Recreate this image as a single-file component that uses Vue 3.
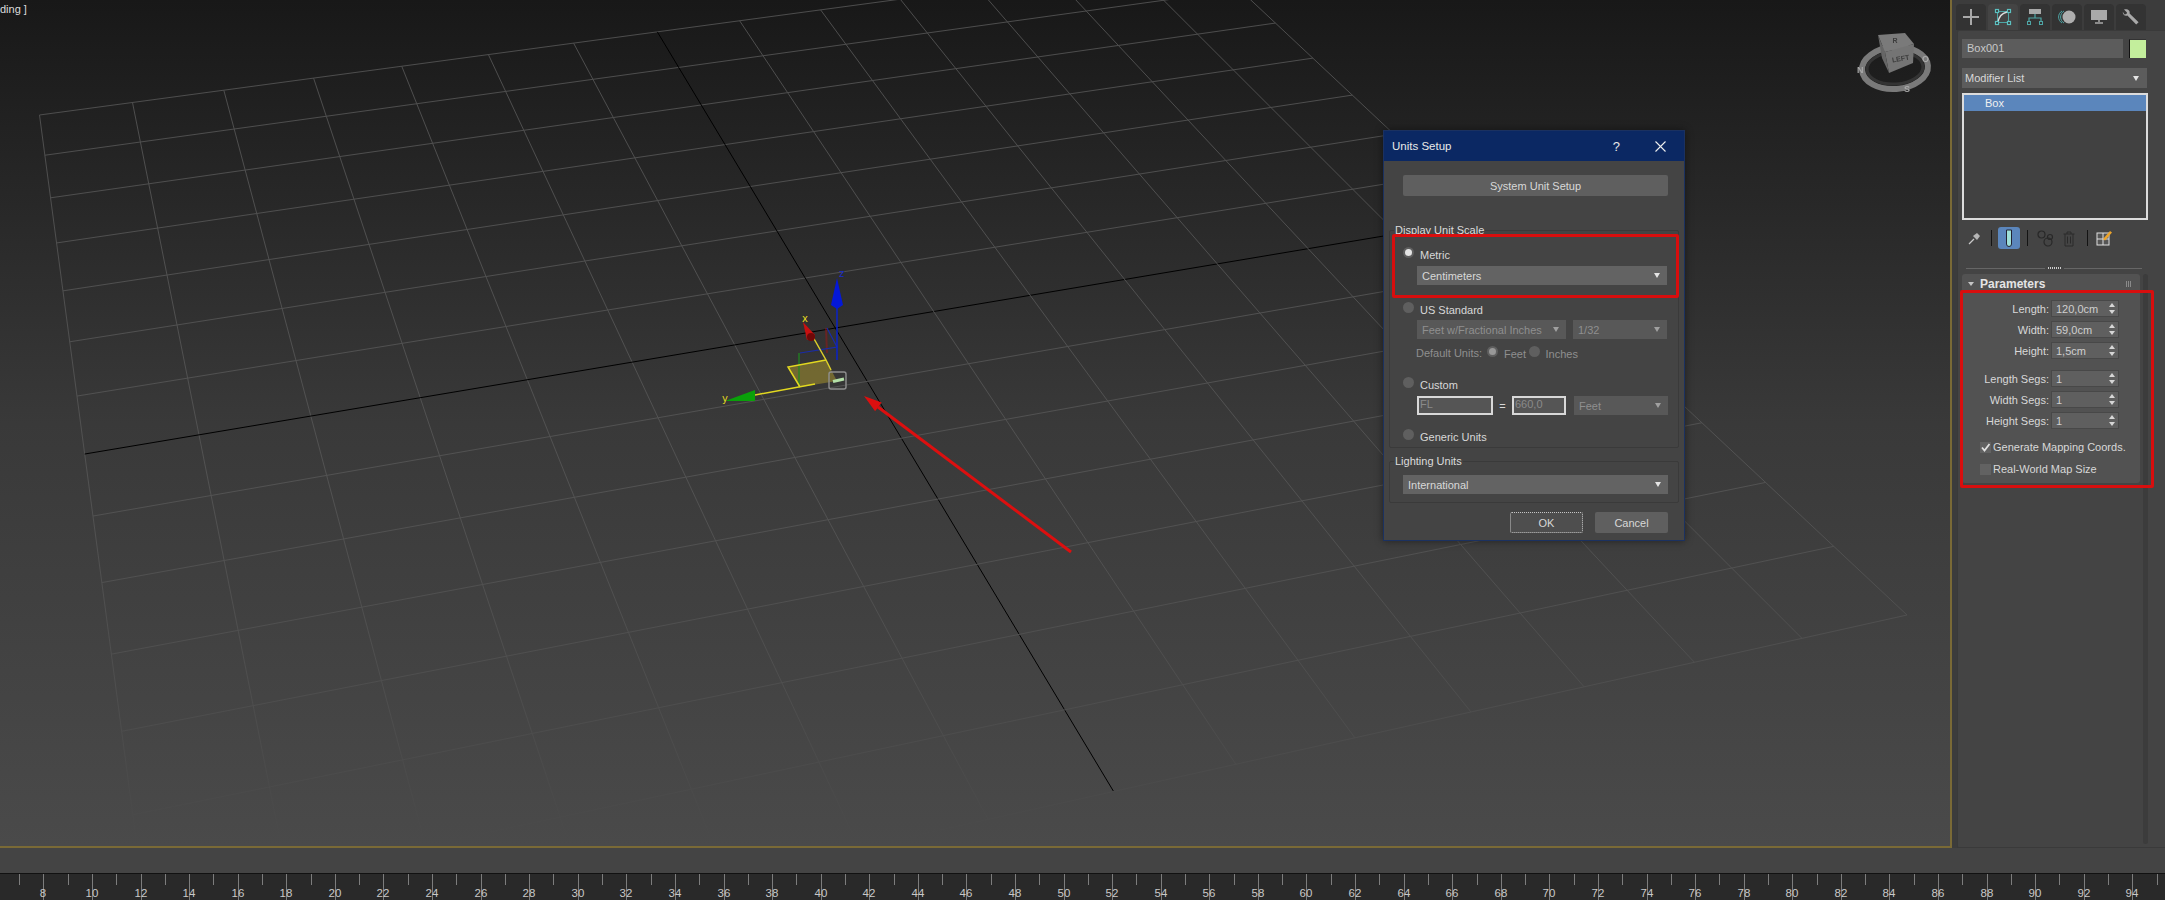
<script setup>
import { computed } from 'vue'

// grid corners read off the screenshot (some lie outside the viewport)
const TL = [39.5, 115]
const TR = [1206, -42]
const BR = [1907, 615]
const BL = [158, 1004]
const CELLS = 14

function makeHomography() {
  const dx1 = TR[0] - BR[0]
  const dx2 = BL[0] - BR[0]
  const sx = TL[0] - TR[0] + BR[0] - BL[0]
  const dy1 = TR[1] - BR[1]
  const dy2 = BL[1] - BR[1]
  const sy = TL[1] - TR[1] + BR[1] - BL[1]
  const den = dx1 * dy2 - dx2 * dy1
  const g = (sx * dy2 - dx2 * sy) / den
  const h = (dx1 * sy - sx * dy1) / den
  const a = TR[0] - TL[0] + g * TR[0]
  const b = BL[0] - TL[0] + h * BL[0]
  const d = TR[1] - TL[1] + g * TR[1]
  const e = BL[1] - TL[1] + h * BL[1]
  return (u, v) => {
    const w = g * u + h * v + 1
    return [(a * u + b * v + TL[0]) / w, (d * u + e * v + TL[1]) / w]
  }
}

const gridLines = computed(() => {
  const map = makeHomography()
  const out = []
  for (let i = 0; i <= CELLS; i++) {
    const t = i / CELLS
    const [a, b] = map(t, 0)
    const [c, d] = map(t, 1)
    const [e, f] = map(0, t)
    const [g, h] = map(1, t)
    out.push({ key: 'v' + i, x1: a, y1: b, x2: c, y2: d, center: i === 7 })
    out.push({ key: 'h' + i, x1: e, y1: f, x2: g, y2: h, center: i === 7 })
  }
  return out
})

const ticks = computed(() => {
  const out = []
  for (let n = 7; n <= 95; n++) {
    out.push({ n, x: Math.round(43.4 + 24.29 * (n - 8)) + 0.5, major: n % 2 === 0 })
  }
  return out
})

const params = [
  { label: 'Length:', value: '120,0cm' },
  { label: 'Width:', value: '59,0cm' },
  { label: 'Height:', value: '1,5cm' },
  { label: 'Length Segs:', value: '1', gap: true },
  { label: 'Width Segs:', value: '1' },
  { label: 'Height Segs:', value: '1' }
]
</script>

<template>
  <div class="app">
    <div class="main">
      <div class="viewport">
        <svg class="scene" width="1950" height="846" viewBox="0 0 1950 846">
          <defs>
            <linearGradient id="gridFade" gradientUnits="userSpaceOnUse" x1="0" y1="0" x2="0" y2="810">
              <stop offset="0" stop-color="#4c4c4c" />
              <stop offset="0.6" stop-color="#525252" />
              <stop offset="0.85" stop-color="#4e4e4e" />
              <stop offset="1" stop-color="#4a4a4a" />
            </linearGradient>
          </defs>
          <line v-for="l in gridLines" :key="l.key" :x1="l.x1" :y1="l.y1" :x2="l.x2" :y2="l.y2"
            :stroke="l.center ? '#000' : 'url(#gridFade)'" stroke-width="1" />

          <!-- transform gizmo -->
          <polygon points="788,367 826,360 837,381 800,387" fill="#7d7130" fill-opacity="0.85" />
          <line x1="826" y1="328" x2="827" y2="353" stroke="#8a1a1a" stroke-opacity="0.6" stroke-width="2" />
          <polyline points="800,353 837,347 827,328" fill="none" stroke="#1a2ca8" stroke-width="1.2" />
          <line x1="799" y1="353" x2="799" y2="387" stroke="#1f8a1f" stroke-width="1.2" />
          <line x1="837" y1="308" x2="837" y2="360" stroke="#0a22c8" stroke-width="1.5" />
          <polygon points="837,278 843,305 837,309 831,305" fill="#0418d8" />
          <polyline points="813,337 826,360 831,370" fill="none" stroke="#dccf2a" stroke-width="1.5" />
          <polyline points="755,395 815,384" fill="none" stroke="#e2d820" stroke-width="1.5" />
          <polyline points="800,387 788,367 826,360" fill="none" stroke="#e2d820" stroke-width="1.5" />
          <polygon points="803,322 815,335 807,340" fill="#c81010" />
          <circle cx="811" cy="337" r="4" fill="#700808" />
          <polygon points="725,401 755,390 755,401" fill="#0aa00a" />
          <rect x="829" y="372" width="17" height="17" rx="2" fill="none" stroke="#8f8f8f" stroke-width="1.4" />
          <line x1="833" y1="381.5" x2="844" y2="379" stroke="#b4e0a8" stroke-width="3" />
          <text x="839" y="277" class="axis axis-z">z</text>
          <text x="802" y="322" class="axis">x</text>
          <text x="722" y="402" class="axis">y</text>

          <!-- view cube -->
          <g class="cube">
            <ellipse cx="1895" cy="68" rx="33" ry="21" fill="none" stroke="#7a7a7a" stroke-width="6" transform="rotate(-4 1895 68)" />
            <ellipse cx="1895" cy="68" rx="28" ry="16" fill="none" stroke="#333" stroke-width="3" transform="rotate(-4 1895 68)" />
            <polygon points="1878,35 1905,33 1914,44 1885,52" fill="#7a7a7a" />
            <polygon points="1885,52 1914,44 1913,63 1889,73" fill="#747474" />
            <polygon points="1878,35 1885,52 1889,73 1882,58" fill="#666" />
            <text x="1901" y="61" class="cube-text" transform="rotate(-10 1901 61)">LEFT</text>
            <text x="1895" y="43" class="cube-text">R</text>
            <text x="1857" y="73" class="ring-text">N</text>
            <text x="1904" y="92" class="ring-text">S</text>
            <text x="1922" y="62" class="ring-text">O</text>
          </g>

          <!-- annotation arrow -->
          <line x1="878" y1="407" x2="1071" y2="552" stroke="#dc0f0f" stroke-width="3" />
          <polygon points="864,396 875.1,411.2 881.7,402.4" fill="#dc0f0f" />
        </svg>
        <span class="shading">ding ]</span>
      </div>

      <aside class="panel">
        <div class="tabs">
          <div class="tab">
            <svg width="18" height="18" viewBox="0 0 18 18"><path d="M9 1v16M1 9h16" stroke="#a9a9a9" stroke-width="2" fill="none" /></svg>
          </div>
          <div class="tab active">
            <svg width="18" height="18" viewBox="0 0 18 18">
              <path d="M3.5 3.5h11M14.5 3.5v11M14.5 14.5h-11M3.5 14.5v-11" stroke="#4ea5a5" stroke-width="1" fill="none" />
              <path d="M4 14C5 8 9 5 13 4" stroke="#ddd" stroke-width="1.4" fill="none" />
              <g fill="#333" stroke="#5cc0c0" stroke-width="1.2">
                <rect x="1.5" y="1.5" width="3" height="3" /><rect x="13.5" y="1.5" width="3" height="3" />
                <rect x="1.5" y="13.5" width="3" height="3" /><rect x="13.5" y="13.5" width="3" height="3" />
              </g>
            </svg>
          </div>
          <div class="tab">
            <svg width="18" height="18" viewBox="0 0 18 18">
              <rect x="3" y="1" width="12" height="5" fill="#a9a9a9" />
              <path d="M9 6v4M3 14v-4h12v4" stroke="#4ea5a5" stroke-width="1.2" fill="none" />
              <rect x="1.5" y="13.5" width="3" height="3" fill="none" stroke="#4ea5a5" />
              <rect x="13.5" y="13.5" width="3" height="3" fill="none" stroke="#4ea5a5" />
            </svg>
          </div>
          <div class="tab">
            <svg width="20" height="18" viewBox="0 0 20 18">
              <path d="M5 3A7 7 0 0 0 5 15" stroke="#4ea5a5" fill="none" />
              <path d="M7 3A7 7 0 0 0 7 15" stroke="#4ea5a5" fill="none" />
              <circle cx="12" cy="9" r="6.5" fill="#aeaeae" />
            </svg>
          </div>
          <div class="tab">
            <svg width="18" height="18" viewBox="0 0 18 18">
              <rect x="1" y="2" width="16" height="10" fill="#a9a9a9" />
              <path d="M9 12v2M5 15h8" stroke="#a9a9a9" stroke-width="1.5" />
            </svg>
          </div>
          <div class="tab">
            <svg width="18" height="18" viewBox="0 0 18 18">
              <path d="M2 1.5 5 4.5 4.5 6 2.5 6.5 0.8 3.8C0.6 6.5 2.5 8.4 5.4 7.6L14.2 16.5 16.6 14.2 7.6 5.4C8.4 2.6 5.6 0.4 2 1.5Z" fill="#a9a9a9" />
            </svg>
          </div>
        </div>

        <div class="panel-body">
          <div class="name-row">
            <div class="name-input">Box001</div>
            <div class="swatch"></div>
          </div>
          <div class="modifier-select">
            <span>Modifier List</span>
            <i class="caret"></i>
          </div>
          <div class="stack-list">
            <div class="stack-item">Box</div>
          </div>
          <div class="stack-tools">
            <svg class="tool-pin" width="14" height="14" viewBox="0 0 14 14">
              <path d="M1 13 6 8" stroke="#c9c9c9" stroke-width="1.2" />
              <path d="M5 5 9 2l3 3-3 4z" fill="#b5b5b5" />
            </svg>
            <span class="tool-sep sep-a"></span>
            <div class="tool-active">
              <svg width="8" height="18" viewBox="0 0 8 18">
                <path d="M1.5 1h5v14a2 2 0 0 1-5 0z" fill="#9fe0d8" stroke="#223" stroke-width="1" />
              </svg>
            </div>
            <span class="tool-sep sep-b"></span>
            <svg class="tool-links" width="17" height="17" viewBox="0 0 17 17">
              <g fill="none" stroke="#282828" stroke-width="1.2">
                <circle cx="4.5" cy="4.5" r="3.5" /><circle cx="11" cy="12" r="4" /><circle cx="13" cy="7" r="2.5" />
              </g>
            </svg>
            <svg class="tool-trash" width="12" height="16" viewBox="0 0 12 16">
              <path d="M0.5 3h11M4 3V1h4v2M2 3v12h8V3M4.5 5.5v7M7.5 5.5v7" fill="none" stroke="#2a2a2a" stroke-width="1" />
            </svg>
            <span class="tool-sep sep-c"></span>
            <svg class="tool-config" width="16" height="16" viewBox="0 0 16 16">
              <rect x="1" y="3" width="12" height="12" fill="#555" stroke="#e0e0e0" />
              <path d="M7 3v12M1 9h12" stroke="#e0e0e0" />
              <path d="M7 9 14 1l2 1.5L9 10.5z" fill="#eda42a" />
            </svg>
          </div>
          <div class="divider">
            <span class="divider-line"></span>
            <span class="divider-dots"></span>
            <span class="divider-line"></span>
          </div>
          <div class="rollouts">
            <section class="rollout">
              <header class="rollout-head">
                <i class="roll-arrow"></i>
                <b>Parameters</b>
                <span class="grip"></span>
              </header>
              <div v-for="p in params" :key="p.label" class="param" :class="{ 'param-gap': p.gap }">
                <label>{{ p.label }}</label>
                <div class="spinner">
                  <span>{{ p.value }}</span>
                  <svg width="6" height="11" viewBox="0 0 6 11"><path d="M3 0 6 4H0zM3 11 0 7h6z" fill="#d6d6d6" /></svg>
                </div>
              </div>
              <div class="check first-check">
                <span class="check-box">
                  <svg width="11" height="11" viewBox="0 0 11 11"><path d="M2 5.5 4.5 8.5 9.5 2" fill="none" stroke="#e2e2e2" stroke-width="1.8" /></svg>
                </span>
                <span>Generate Mapping Coords.</span>
              </div>
              <div class="check">
                <span class="check-box"></span>
                <span>Real-World Map Size</span>
              </div>
            </section>
            <div class="scroll-track"></div>
          </div>
        </div>
      </aside>
    </div>

    <div class="trackbar"></div>
    <svg class="ruler" width="2165" height="27" viewBox="0 0 2165 27">
      <line x1="0" y1="0.5" x2="2165" y2="0.5" stroke="#111" />
      <template v-for="t in ticks" :key="t.n">
        <line :x1="t.x" y1="1" :x2="t.x" :y2="t.major ? 27 : 12" stroke="#7d7d7d" />
        <text v-if="t.major" :x="t.x - 0.5" y="24" class="ruler-num">{{ t.n }}</text>
      </template>
    </svg>

    <div class="dialog">
      <div class="dialog-title">
        <span class="dialog-name">Units Setup</span>
        <span class="dialog-help">?</span>
        <svg class="dialog-close" width="11" height="11" viewBox="0 0 11 11"><path d="M0.5 0.5 10.5 10.5M10.5 0.5 0.5 10.5" stroke="#eee" stroke-width="1.1" /></svg>
      </div>
      <div class="btn system-btn">System Unit Setup</div>

      <div class="group scale-group">
        <span class="group-label">Display Unit Scale</span>
        <div class="radio-row row-metric"><span class="radio checked"></span><span>Metric</span></div>
        <div class="select row-centi"><span>Centimeters</span><i class="caret"></i></div>
        <div class="radio-row row-us"><span class="radio"></span><span>US Standard</span></div>
        <div class="field-row row-feet">
          <div class="select disabled feet-select"><span>Feet w/Fractional Inches</span><i class="caret"></i></div>
          <div class="select disabled small-select"><span>1/32</span><i class="caret"></i></div>
        </div>
        <div class="default-row">
          <span class="default-label">Default Units:</span>
          <span class="radio dim-checked"></span>
          <span class="default-feet">Feet</span>
          <span class="radio"></span>
          <span class="default-inches">Inches</span>
        </div>
        <div class="radio-row row-custom"><span class="radio"></span><span>Custom</span></div>
        <div class="field-row row-inputs">
          <div class="text-input fl-input">FL</div>
          <span class="equals">=</span>
          <div class="text-input num-input">660,0</div>
          <div class="select disabled small-select"><span>Feet</span><i class="caret"></i></div>
        </div>
        <div class="radio-row row-generic"><span class="radio"></span><span>Generic Units</span></div>
      </div>

      <div class="group light-group">
        <span class="group-label">Lighting Units</span>
        <div class="select intl-select"><span>International</span><i class="caret"></i></div>
      </div>

      <div class="dialog-actions">
        <div class="btn ok-btn">OK</div>
        <div class="btn">Cancel</div>
      </div>
    </div>

    <div class="mark mark-metric"></div>
    <div class="mark mark-params"></div>
  </div>
</template>

<style>
html, body {
  margin: 0;
  background: #444;
}
</style>

<style scoped>
.app {
  position: relative;
  width: 2165px;
  height: 900px;
  overflow: hidden;
  background: #444;
  color: #d8d8d8;
  font-family: "Liberation Sans", Arial, sans-serif;
  font-size: 11px;
  white-space: nowrap;
}

.main {
  display: flex;
  height: 848px;
}

.viewport {
  position: relative;
  box-sizing: border-box;
  width: 1952px;
  height: 848px;
  border-right: 2px solid #7a6a36;
  border-bottom: 2px solid #7a6a36;
  background: linear-gradient(#181818 0%, #393939 50%, #4a4a4a 100%);
}
.scene {
  display: block;
}
.shading {
  position: absolute;
  left: 0;
  top: 3px;
  font-size: 11px;
  color: #ddd;
}
.axis {
  fill: #e2d820;
  font-size: 10px;
  font-family: "DejaVu Sans", sans-serif;
}
.axis-z {
  fill: #1a2cc8;
}
.cube {
  filter: blur(0.5px);
}
.cube-text {
  fill: #3c3c3c;
  font-size: 7px;
  font-weight: bold;
  text-anchor: middle;
}
.ring-text {
  fill: #aaa;
  font-size: 9px;
  font-weight: bold;
}

.panel {
  flex: 1;
  background: #3c3c3c;
}
.tabs {
  display: flex;
  gap: 2px;
  height: 26px;
  padding: 4px 0 0 4px;
}
.tab {
  display: flex;
  align-items: center;
  justify-content: center;
  width: 30px;
  background: #333;
  border-radius: 4px 4px 0 0;
}
.tab.active {
  background: #444;
}
.panel-body {
  box-sizing: border-box;
  height: 818px;
  margin-left: 5px;
  padding: 8px 0 0 4px;
  background: #444;
  border-top: 1px solid #3a3a3a;
  border-left: 1px solid #3a3a3a;
  border-bottom: 1px solid #3a3a3a;
  border-radius: 2px 0 0 2px;
}
.name-row {
  display: flex;
  gap: 6px;
}
.name-input {
  box-sizing: border-box;
  width: 161px;
  height: 19px;
  padding-left: 5px;
  line-height: 19px;
  background: #5c5c5c;
  color: #c8c8c8;
}
.swatch {
  box-sizing: border-box;
  width: 17px;
  height: 19px;
  background: #c3ee9c;
  border-left: 1px solid #111;
  border-top: 1px solid #333;
}
.modifier-select {
  display: flex;
  align-items: center;
  justify-content: space-between;
  box-sizing: border-box;
  width: 185px;
  height: 20px;
  margin-top: 10px;
  padding: 0 8px 0 3px;
  background: #5c5c5c;
}
.caret {
  display: block;
  width: 0;
  height: 0;
  border-left: 3.5px solid transparent;
  border-right: 3.5px solid transparent;
  border-top: 5px solid #e4e4e4;
}
.stack-list {
  box-sizing: border-box;
  width: 186px;
  height: 127px;
  margin-top: 5px;
  border: 2px solid #dcdcdc;
  background: #414141;
}
.stack-item {
  height: 16px;
  padding-left: 21px;
  line-height: 16px;
  background: #5b86bc;
  color: #f0f0f0;
}
.stack-tools {
  position: relative;
  height: 22px;
  margin-top: 7px;
}
.stack-tools svg {
  position: absolute;
}
.tool-pin {
  left: 6px;
  top: 4px;
}
.tool-sep {
  position: absolute;
  top: 3px;
  width: 1px;
  height: 16px;
  background: #141414;
}
.sep-a {
  left: 29px;
}
.sep-b {
  left: 65px;
}
.sep-c {
  left: 125px;
}
.tool-active {
  position: absolute;
  left: 36px;
  top: 0;
  display: flex;
  align-items: center;
  justify-content: center;
  width: 22px;
  height: 22px;
  background: #5b86bc;
  border-radius: 3px;
}
.tool-active svg {
  position: static;
}
.tool-links {
  left: 75px;
  top: 3px;
}
.tool-trash {
  left: 101px;
  top: 4px;
}
.tool-config {
  left: 134px;
  top: 3px;
}
.divider {
  display: flex;
  align-items: center;
  gap: 3px;
  width: 176px;
  height: 2px;
  margin: 18px 0 0 4px;
}
.divider-line {
  flex: 1;
  height: 1px;
  background: #666;
}
.divider-dots {
  width: 13px;
  height: 2px;
  background: repeating-linear-gradient(90deg, #ccc 0 1px, transparent 1px 2px);
}
.rollouts {
  display: flex;
  align-items: flex-start;
  gap: 3px;
  margin-top: 5px;
}
.rollout {
  box-sizing: border-box;
  width: 178px;
  height: 209px;
  background: #525252;
  border-radius: 3px;
}
.rollout-head {
  display: flex;
  align-items: center;
  height: 20px;
  padding-left: 6px;
  position: relative;
}
.rollout-head b {
  margin-left: 6px;
  font-size: 12px;
  color: #e4e4e4;
}
.roll-arrow {
  display: block;
  width: 0;
  height: 0;
  border-left: 3px solid transparent;
  border-right: 3px solid transparent;
  border-top: 4px solid #c4c4c4;
}
.grip {
  position: absolute;
  right: 8px;
  top: 7px;
  width: 6px;
  height: 6px;
  background: repeating-linear-gradient(90deg, #8a8a8a 0 1px, transparent 1px 2px);
}
.param {
  display: flex;
  align-items: center;
  gap: 3px;
  height: 15px;
  margin-top: 6px;
}
.param:first-of-type {
  margin-top: 7px;
}
.param-gap {
  margin-top: 13px;
}
.param label {
  width: 87px;
  text-align: right;
}
.spinner {
  display: flex;
  align-items: center;
  justify-content: space-between;
  box-sizing: border-box;
  width: 66px;
  height: 15px;
  padding: 0 3px 0 4px;
  background: #5f5f5f;
  box-shadow: 0 0 0 1px #484848;
  color: #cfcfcf;
}
.check {
  display: flex;
  align-items: center;
  height: 14px;
  margin: 8px 0 0 18px;
  gap: 2px;
}
.first-check {
  margin-top: 12px;
}
.check-box {
  display: block;
  width: 11px;
  height: 11px;
  background: #626262;
}
.check-box svg {
  display: block;
}
.scroll-track {
  width: 5px;
  height: 570px;
  background: #3c3c3c;
  border-radius: 3px;
}

.trackbar {
  height: 25px;
  background: #444;
}
.ruler {
  display: block;
  background: #292929;
}
.ruler-num {
  fill: #c8c8c8;
  font-size: 11.5px;
  text-anchor: middle;
}

.dialog {
  position: absolute;
  left: 1383px;
  top: 130px;
  box-sizing: border-box;
  width: 302px;
  height: 411px;
  background: #444;
  border: 1px solid #1b3160;
  box-shadow: 0 0 8px rgba(0, 0, 0, 0.45);
}
.dialog-title {
  display: flex;
  align-items: center;
  height: 30px;
  padding-left: 8px;
  background: #0b2863;
  color: #e8e8e8;
  font-size: 11.5px;
}
.dialog-name {
  flex: 1;
}
.dialog-help {
  margin-right: 35px;
  font-size: 13px;
}
.dialog-close {
  margin-right: 18px;
}
.btn {
  display: flex;
  align-items: center;
  justify-content: center;
  box-sizing: border-box;
  width: 73px;
  height: 21px;
  background: #5f5f5f;
  border-radius: 2px;
  color: #d8d8d8;
}
.system-btn {
  width: 265px;
  margin: 14px 0 0 19px;
}
.group {
  position: relative;
  box-sizing: border-box;
  width: 290px;
  margin-left: 5px;
  padding-left: 13px;
  border: 1px solid #3a3a3a;
  border-radius: 2px;
}
.group-label {
  position: absolute;
  left: 4px;
  top: -7px;
  padding: 0 1px;
  background: #444;
  color: #dcdcdc;
}
.scale-group {
  height: 218px;
  margin-top: 34px;
}
.light-group {
  height: 42px;
  margin-top: 13px;
}
.radio-row {
  display: flex;
  align-items: center;
  gap: 6px;
  height: 16px;
}
.radio-row span:last-child {
  padding-top: 2px;
}
.radio {
  position: relative;
  flex: none;
  display: block;
  width: 11px;
  height: 11px;
  margin-top: -3px;
  border-radius: 50%;
  background: #5f5f5f;
}
.radio.checked::after,
.radio.dim-checked::after {
  content: "";
  position: absolute;
  left: 2px;
  top: 2px;
  width: 7px;
  height: 7px;
  border-radius: 50%;
  background: #e4e4e4;
}
.radio.dim-checked::after {
  background: #989898;
}
.row-metric {
  margin-top: 15px;
}
.select {
  display: flex;
  align-items: center;
  justify-content: space-between;
  box-sizing: border-box;
  height: 19px;
  padding: 0 7px 0 5px;
  background: #636363;
  color: #d8d8d8;
}
.select.disabled {
  background: #585858;
  color: #8f8f8f;
}
.select.disabled .caret {
  border-top-color: #a0a0a0;
}
.row-centi {
  width: 250px;
  margin: 4px 0 0 14px;
}
.row-us {
  margin-top: 16px;
}
.field-row {
  display: flex;
  align-items: center;
  height: 19px;
  margin-left: 14px;
}
.row-feet {
  gap: 7px;
  margin-top: 3px;
}
.feet-select {
  width: 149px;
}
.small-select {
  width: 94px;
}
.default-row {
  display: flex;
  align-items: center;
  height: 16px;
  margin: 6px 0 0 13px;
  color: #8f8f8f;
}
.default-label {
  width: 71px;
}
.default-feet {
  width: 24.5px;
  margin-left: 6px;
  padding-top: 2px;
}
.default-inches {
  margin-left: 6px;
  padding-top: 2px;
}
.row-custom {
  margin-top: 15px;
}
.row-inputs {
  margin-top: 4px;
}
.text-input {
  box-sizing: border-box;
  height: 19px;
  border: 2px solid #d8d8d8;
  line-height: 13px;
  padding-left: 1px;
  color: #8a8a8a;
  background: #555;
}
.fl-input {
  width: 76px;
}
.num-input {
  width: 54px;
  margin-right: 8px;
}
.equals {
  width: 19px;
  text-align: center;
}
.row-generic {
  margin-top: 13px;
}
.intl-select {
  width: 265px;
  margin-top: 13px;
}
.dialog-actions {
  display: flex;
  justify-content: flex-end;
  gap: 12px;
  margin: 9px 16px 0 0;
}
.ok-btn {
  background: #4e4e4e;
  border: 1px dotted #c4c4c4;
}

.mark {
  position: absolute;
  box-sizing: border-box;
  border: 3px solid #d80e0e;
  border-radius: 2px;
}
.mark-metric {
  left: 1392px;
  top: 234px;
  width: 287px;
  height: 64px;
}
.mark-params {
  left: 1960px;
  top: 290px;
  width: 194px;
  height: 198px;
}
</style>
